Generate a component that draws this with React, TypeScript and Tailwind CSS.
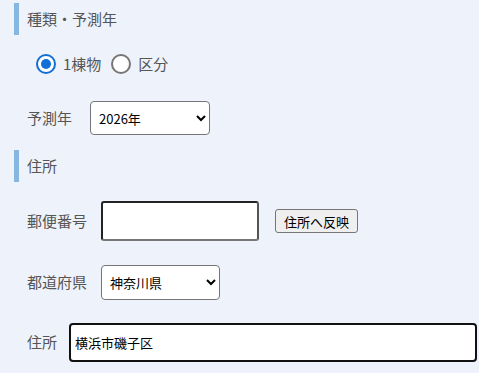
import { useState } from 'react';

const FONT = { fontFamily: '"Noto Sans CJK JP", "Noto Sans", sans-serif' };

function SectionTitle({ label }: { label: string }) {
  return (
    <div className="ml-[14px] flex h-8 items-center border-l-[5px] border-[#86b6e2] pl-2 text-[15px] text-[#555]">
      {label}
    </div>
  );
}

function Radio({ checked, label, onClick }: { checked: boolean; label: string; onClick: () => void }) {
  return (
    <label className="flex cursor-pointer items-center gap-[7px]" onClick={onClick}>
      <span
        className={`flex h-5 w-5 items-center justify-center rounded-full border-2 bg-white ${
          checked ? 'border-[#0f6fd6]' : 'border-[#767676]'
        }`}
      >
        {checked && <span className="h-[10px] w-[10px] rounded-full bg-[#0f6fd6]" />}
      </span>
      <span className="text-[15px] text-[#555]">{label}</span>
    </label>
  );
}

export default function App() {
  const [kind, setKind] = useState<'building' | 'unit'>('building');

  return (
    <div className="h-[373px] w-[479px] overflow-hidden bg-[#eef2fb]" style={FONT}>
      <div className="pt-[3px]">
        <SectionTitle label="種類・予測年" />
      </div>

      <div className="mt-[19px] flex h-5 items-center gap-[10px] pl-9">
        <Radio checked={kind === 'building'} label="1棟物" onClick={() => setKind('building')} />
        <Radio checked={kind === 'unit'} label="区分" onClick={() => setKind('unit')} />
      </div>

      <div className="mt-[27px] flex items-center pl-[27px]">
        <span className="w-[63px] text-[15px] text-[#555]">予測年</span>
        <select
          defaultValue="2026"
          className="h-[34px] w-[120px] rounded-[4px] border border-[#767676] bg-white pl-1 text-[13px] text-black"
        >
          <option value="2025">2025年</option>
          <option value="2026">2026年</option>
          <option value="2027">2027年</option>
        </select>
      </div>

      <div className="mt-[15px]">
        <SectionTitle label="住所" />
      </div>

      <div className="mt-[19px] flex items-center pl-[27px]">
        <span className="w-[74px] text-[15px] text-[#555]">郵便番号</span>
        <input
          type="text"
          className="h-10 w-[158px] rounded-[3px] border-2 border-[#222] border-b-[#777] border-r-[#555] bg-white px-1"
        />
        <button className="ml-4 h-6 rounded-[3px] border border-[#767676] bg-[#efefef] px-[8px] text-[13px] leading-none text-black">
          住所へ反映
        </button>
      </div>

      <div className="mt-6 flex items-center pl-[27px]">
        <span className="w-[74px] text-[15px] text-[#555]">都道府県</span>
        <select
          defaultValue="kanagawa"
          className="h-[35px] w-[119px] rounded-[4px] border border-[#767676] bg-white pl-1 text-[13px] text-black"
        >
          <option value="tokyo">東京都</option>
          <option value="kanagawa">神奈川県</option>
          <option value="saitama">埼玉県</option>
        </select>
      </div>

      <div className="mt-[23px] flex items-center pl-[27px]">
        <span className="w-[42px] text-[15px] text-[#555]">住所</span>
        <input
          type="text"
          defaultValue="横浜市磯子区"
          className="h-[39px] w-[408px] rounded-[4px] border-2 border-[#111] bg-white px-1 text-[13px] text-black"
        />
      </div>
    </div>
  );
}
